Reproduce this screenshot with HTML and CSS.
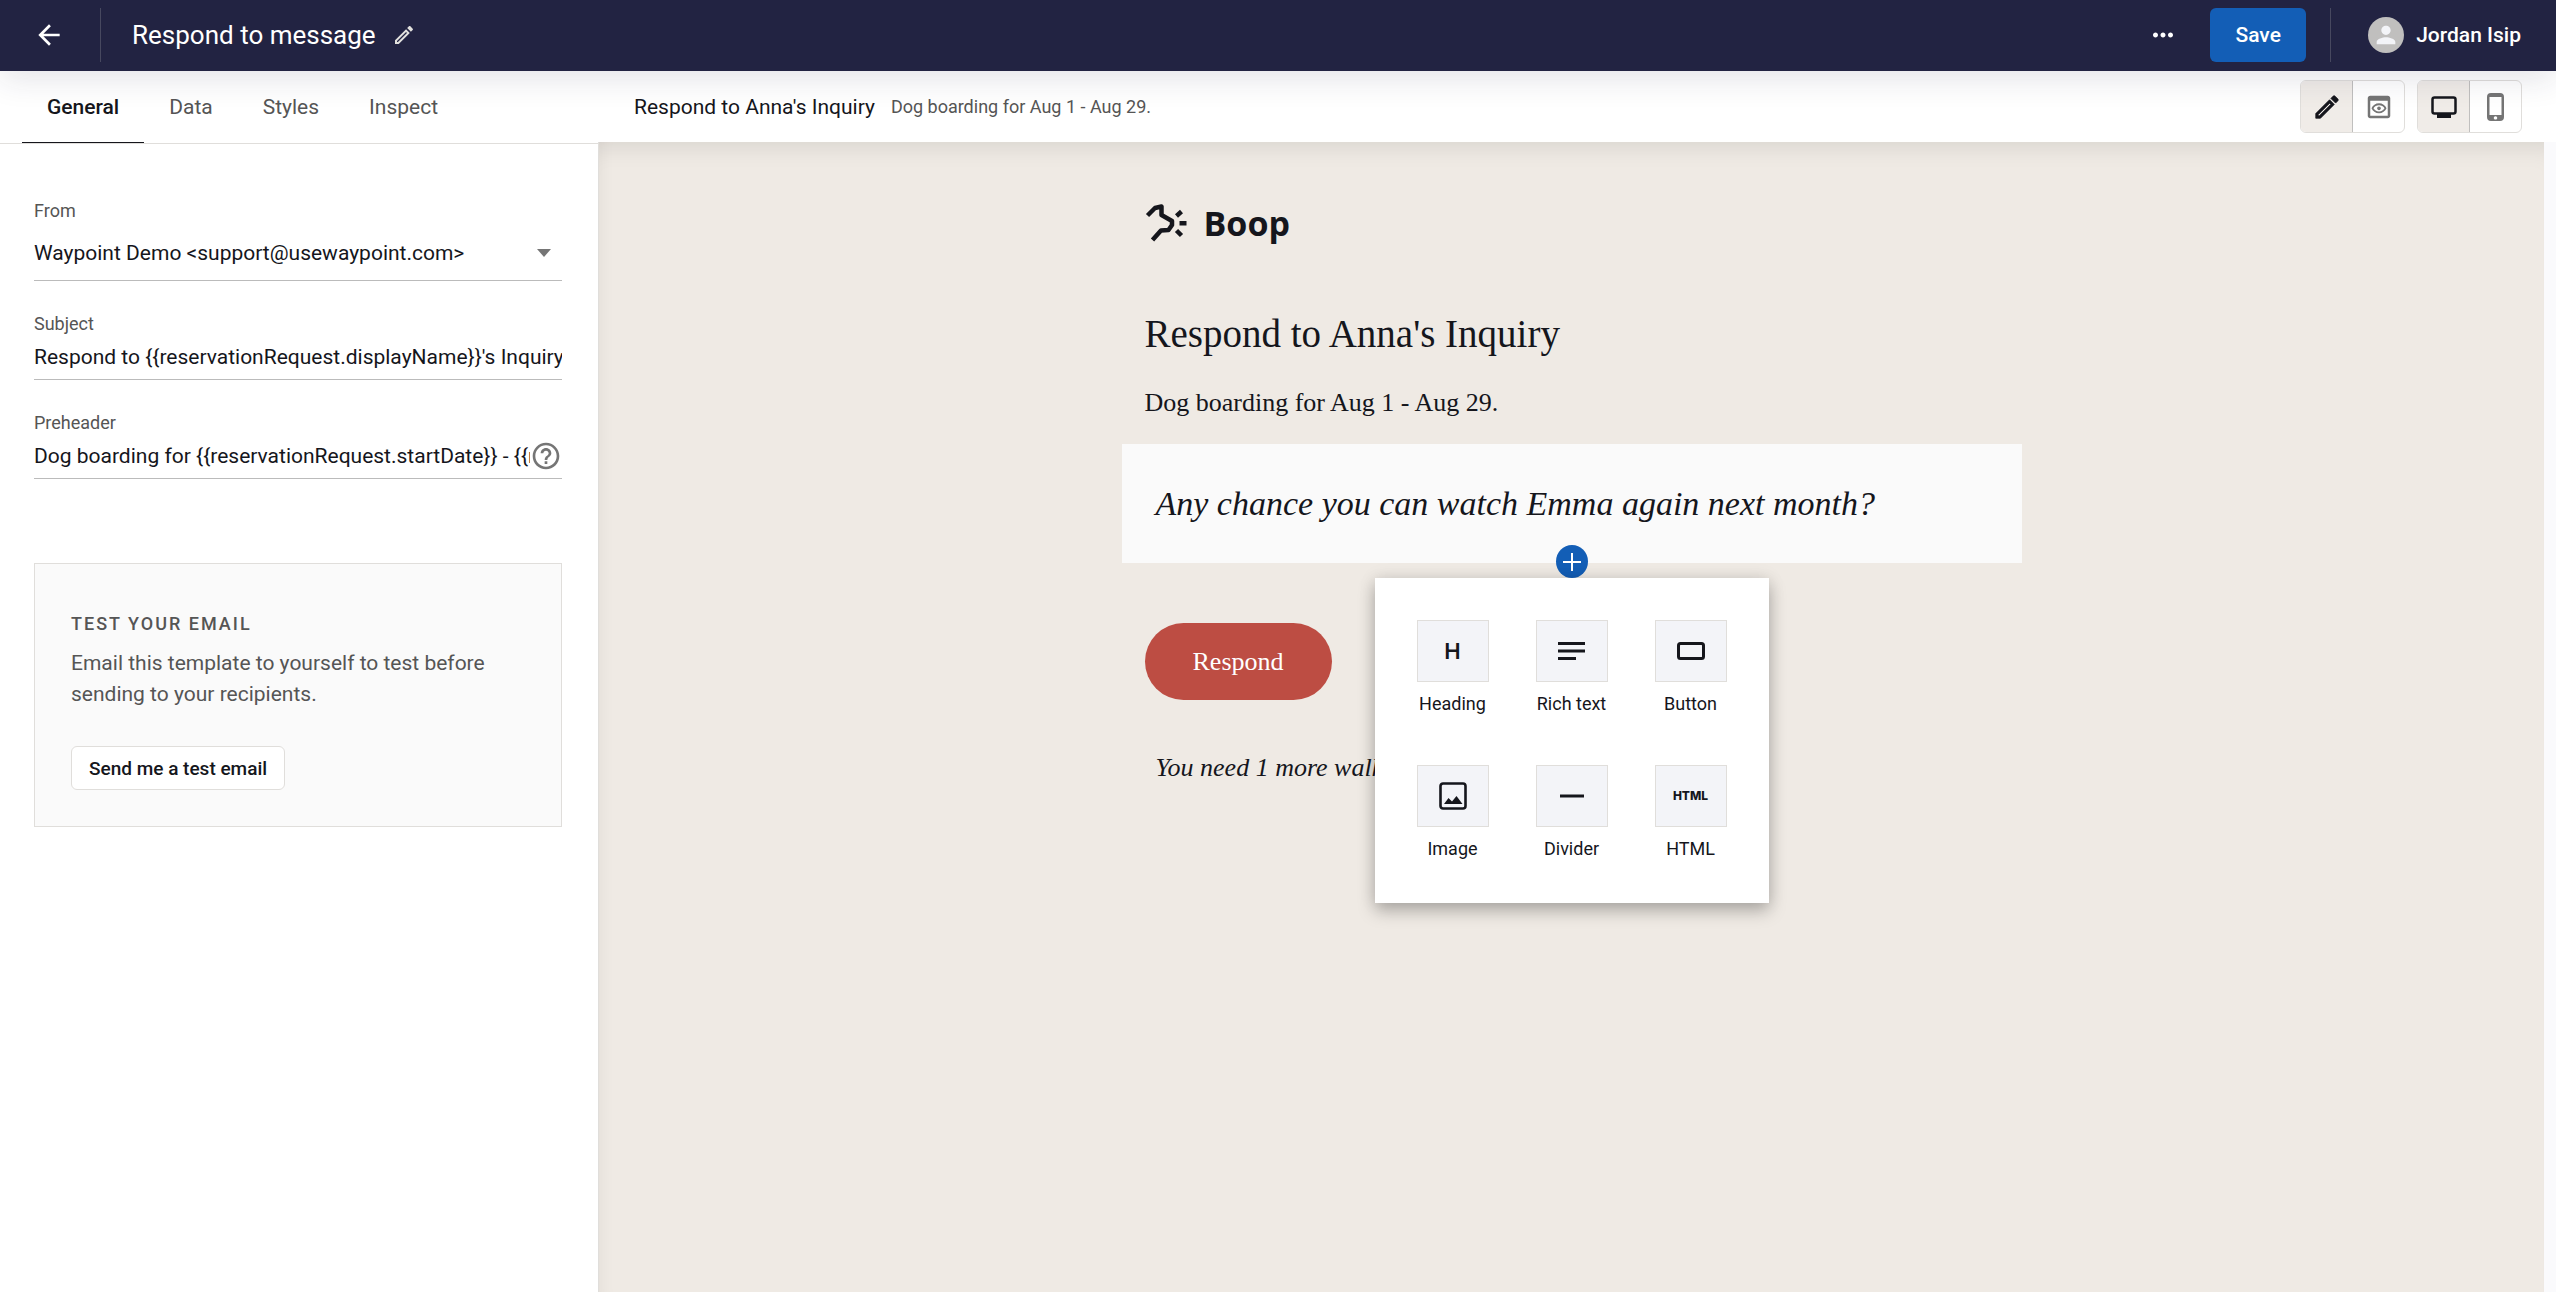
FILE: index.html
```html
<!DOCTYPE html>
<html lang="en">
<head>
<meta charset="utf-8">
<title>Respond to message</title>
<link rel="stylesheet" href="styles.css">
</head>
<body>
<header class="topbar">
  <button class="icon-btn back" type="button" aria-label="Back">
    <svg width="32" height="32" viewBox="0 0 24 24" fill="currentColor"><path d="M20 11H7.83l5.59-5.59L12 4l-8 8 8 8 1.41-1.41L7.83 13H20v-2z"/></svg>
  </button>
  <span class="divider"></span>
  <h1 class="title">Respond to message</h1>
  <button class="icon-btn rename" type="button" aria-label="Rename">
    <svg width="24" height="24" viewBox="0 0 24 24" fill="currentColor"><path d="M14.06 9.02l.92.92L5.92 19H5v-.92l9.06-9.06M17.66 3c-.25 0-.51.1-.7.29l-1.83 1.83 3.75 3.75 1.83-1.83c.39-.39.39-1.02 0-1.41l-2.34-2.34c-.2-.2-.45-.29-.71-.29zm-3.6 3.19L3 17.25V21h3.75L17.81 9.94l-3.75-3.75z"/></svg>
  </button>
  <div class="actions">
    <button class="icon-btn more" type="button" aria-label="More">
      <svg width="30" height="30" viewBox="0 0 24 24" fill="currentColor"><path d="M6 10c-1.100 0-2 .9-2 2s.9 2 2 2 2-.9 2-2-.9-2-2-2zm12 0c-1.100 0-2 .9-2 2s.9 2 2 2 2-.9 2-2-.9-2-2-2zm-6 0c-1.100 0-2 .9-2 2s.9 2 2 2 2-.9 2-2-.9-2-2-2z"/></svg>
    </button>
    <button class="save" type="button">Save</button>
    <span class="divider"></span>
    <button class="user" type="button">
      <span class="avatar"><svg width="28" height="28" viewBox="0 0 24 24" fill="currentColor"><path d="M12 12c2.210 0 4-1.790 4-4s-1.790-4-4-4-4 1.790-4 4 1.790 4 4 4zm0 2c-2.670 0-8 1.340-8 4v2h16v-2c0-2.660-5.330-4-8-4z"/></svg></span>
      Jordan Isip
    </button>
  </div>
</header>
<div class="workspace">
  <aside class="sidebar">
    <nav class="tabs">
      <button class="tab active" type="button">General</button>
      <button class="tab" type="button">Data</button>
      <button class="tab" type="button">Styles</button>
      <button class="tab" type="button">Inspect</button>
    </nav>
    <form class="settings">
      <div class="field from">
        <label for="from">From</label>
        <div class="control">
          <select id="from"><option>Waypoint Demo &lt;support@usewaypoint.com&gt;</option></select>
          <svg class="caret" width="14" height="8" viewBox="0 0 14 8" fill="currentColor"><path d="M0 0h14L7 8z"/></svg>
        </div>
      </div>
      <div class="field">
        <label for="subject">Subject</label>
        <div class="control"><input id="subject" type="text" value="Respond to {{reservationRequest.displayName}}'s Inquiry"></div>
      </div>
      <div class="field">
        <label for="preheader">Preheader</label>
        <div class="control">
          <input id="preheader" type="text" value="Dog boarding for {{reservationRequest.startDate}} - {{reservationRequest.endDate}}.">
          <svg class="help" width="32" height="32" viewBox="0 0 24 24" fill="currentColor"><path d="M11 18h2v-2h-2v2zm1-16C6.480 2 2 6.480 2 12s4.480 10 10 10 10-4.480 10-10S17.520 2 12 2zm0 18c-4.410 0-8-3.590-8-8s3.590-8 8-8 8 3.590 8 8-3.590 8-8 8zm0-14c-2.210 0-4 1.790-4 4h2c0-1.100.9-2 2-2s2 .9 2 2c0 2-3 1.750-3 5h2c0-2.250 3-2.500 3-5 0-2.210-1.790-4-4-4z"/></svg>
        </div>
      </div>
      <section class="test-card">
        <h2>TEST YOUR EMAIL</h2>
        <p>Email this template to yourself to test before sending to your recipients.</p>
        <button class="outlined" type="button">Send me a test email</button>
      </section>
    </form>
  </aside>
  <main class="preview">
    <div class="preview-bar">
      <span class="preview-subject">Respond to Anna's Inquiry</span>
      <span class="preview-text">Dog boarding for Aug 1 - Aug 29.</span>
      <div class="toggles">
        <div class="toggle-group">
          <button class="toggle on" type="button" aria-label="Edit"><svg width="30" height="30" viewBox="0 0 24 24" fill="currentColor"><path d="M14.060 9.020l.92.92L5.920 19H5v-.92l9.060-9.060M17.660 3c-.25 0-.51.1-.7.29l-1.830 1.830 3.750 3.750 1.830-1.830c.39-.39.39-1.020 0-1.410l-2.340-2.340c-.2-.2-.45-.29-.71-.29zm-3.600 3.190L3 17.250V21h3.750L17.810 9.940l-3.750-3.750z" stroke="currentColor" stroke-width=".6"/></svg></button>
          <button class="toggle" type="button" aria-label="Preview"><svg width="30" height="30" viewBox="0 0 24 24" fill="currentColor"><path d="M19 3H5c-1.110 0-2 .9-2 2v14c0 1.100.89 2 2 2h14c1.100 0 2-.9 2-2V5c0-1.100-.89-2-2-2zm0 16H5V7h14v12zm-5.500-6c0 .83-.67 1.500-1.500 1.500s-1.500-.67-1.500-1.500.67-1.500 1.500-1.500 1.500.67 1.500 1.500zM12 9c-2.730 0-5.060 1.660-6 4 .94 2.340 3.270 4 6 4s5.060-1.660 6-4c-.94-2.340-3.270-4-6-4zm0 6.500c-2 0-3.600-1-4.400-2.500.8-1.500 2.400-2.500 4.400-2.500s3.600 1 4.400 2.500c-.8 1.500-2.400 2.500-4.400 2.500z"/></svg></button>
        </div>
        <div class="toggle-group">
          <button class="toggle on" type="button" aria-label="Desktop"><svg width="26" height="24" viewBox="0 0 26 24" fill="none"><rect x="1.500" y="2.500" width="23" height="16" rx="2" stroke="currentColor" stroke-width="2.500"/><path d="M6 19h14v4H6z" fill="currentColor"/></svg></button>
          <button class="toggle" type="button" aria-label="Mobile"><svg width="18" height="28" viewBox="0 0 18 28"><path fill="currentColor" fill-rule="evenodd" d="M4 0h9a4 4 0 0 1 4 4v20a4 4 0 0 1-4 4H4a4 4 0 0 1-4-4V4a4 4 0 0 1 4-4zM2.500 4v18h12V4zM8.500 23.200a1.700 1.700 0 1 0 .01 0z"/></svg></button>
        </div>
      </div>
    </div>
    <div class="canvas">
      <article class="email">
        <div class="logo">
          <svg width="44" height="40" viewBox="0 0 44 40" fill="none" stroke="currentColor" stroke-width="4.500" stroke-linejoin="round"><path d="M2.500 12.500L10 5l6.500-1.500V12l10.500 6v4l-3.500 5-7.500.5L7.500 37"/><path d="M31.500 13l5-4.500M34.500 20.300h7M31.500 27.500l5 5"/></svg>
          <span>Boop</span>
        </div>
        <h2 class="heading">Respond to Anna's Inquiry</h2>
        <p class="body-text">Dog boarding for Aug 1 - Aug 29.</p>
        <div class="quote">
          <p>Any chance you can watch Emma again next month?</p>
          <div class="inserter">
            <button class="add" type="button" aria-label="Add block"><svg width="18" height="18" viewBox="0 0 18 18" stroke="currentColor" stroke-width="2"><path d="M9 0v18M0 9h18"/></svg></button>
            <div class="block-menu">
              <button class="block" type="button"><span class="tile h-tile">H</span>Heading</button>
              <button class="block" type="button"><span class="tile"><svg width="28" height="20" viewBox="0 0 28 20" stroke="currentColor" stroke-width="3"><path d="M0 2.500h27M0 10h27M0 17.500h18"/></svg></span>Rich text</button>
              <button class="block" type="button"><span class="tile"><svg width="28" height="18" viewBox="0 0 28 18" fill="none" stroke="currentColor" stroke-width="3"><rect x="1.500" y="1.500" width="25" height="15" rx="2"/></svg></span>Button</button>
              <button class="block" type="button"><span class="tile"><svg width="28" height="28" viewBox="0 0 28 28"><rect x="1.500" y="1.500" width="25" height="25" rx="2.500" fill="none" stroke="currentColor" stroke-width="2.600"/><path d="M5 22l4.500-6 3.500 3.500L17.500 14l6 8z" fill="currentColor"/></svg></span>Image</button>
              <button class="block" type="button"><span class="tile"><svg width="24" height="4" viewBox="0 0 24 4" fill="currentColor"><path d="M0 .5h24v3H0z"/></svg></span>Divider</button>
              <button class="block" type="button"><span class="tile html-tile">HTML</span>HTML</button>
            </div>
          </div>
        </div>
        <a class="respond" href="#">Respond</a>
        <p class="note">You need 1 more walk</p>
      </article>
    </div>
  </main>
</div>
</body>
</html>
```
FILE: styles.css
```css
* { box-sizing: border-box; }

body {
  margin: 0;
  min-height: 100vh;
  display: flex;
  flex-direction: column;
  background: #fff;
  color: #15161c;
  font-family: Roboto, "Liberation Sans", sans-serif;
  font-size: 21px;
}

h1, h2, p { margin: 0; font-weight: 400; }

button, input, select {
  font: inherit;
  color: inherit;
  border: 0;
  padding: 0;
  margin: 0;
  background: none;
}

svg { display: block; flex: none; }

/* Top bar */
.topbar {
  position: relative;
  z-index: 2;
  display: flex;
  align-items: center;
  height: 71px;
  padding: 0 35px 2px 33px;
  background: #222342;
  color: #fff;
  box-shadow: 0 8px 32px rgba(34, 35, 66, 0.12);
}
.icon-btn { display: flex; }
.divider { width: 1px; height: 54px; background: #47485f; }
.back { margin-right: 35px; }
.title { margin-left: 31px; font-size: 26px; line-height: 32px; }
.rename { margin-left: 16px; color: #e2e1de; }
.actions { display: flex; align-items: center; margin-left: auto; }
.save {
  width: 96px;
  height: 54px;
  margin: 0 24px 0 32px;
  border-radius: 6px;
  background: #135eb6;
  font-weight: 500;
}
.user { display: flex; align-items: center; gap: 12px; margin-left: 37px; font-weight: 500; }
.avatar {
  display: flex;
  align-items: center;
  justify-content: center;
  width: 36px;
  height: 36px;
  border-radius: 50%;
  background: #c0bfbe;
  color: #f3f4f8;
}

.workspace { flex: 1; display: flex; }

/* Sidebar */
.sidebar { flex: 0 0 598px; }
.tabs {
  display: flex;
  height: 73px;
  padding: 0 22px;
  border-bottom: 1px solid #e0dedb;
}
.tab { padding: 0 25px; color: #555; border-bottom: 1px solid transparent; }
.tab.active { color: #15161c; border-color: #15161c; font-weight: 500; }

.settings { padding: 55px 36px 0 34px; }
.field { margin-bottom: 31px; }
.field label { display: block; font-size: 18px; line-height: 24px; color: #555; }
.control {
  display: flex;
  align-items: center;
  height: 44px;
  padding-bottom: 2px;
  border-bottom: 1px solid #bbb;
}
.from .control { height: 58px; padding: 3px 0 0; }
.control input, .control select { flex: 1; min-width: 0; height: 100%; outline: 0; appearance: none; }
.caret { margin-right: 11px; color: #757575; }
.help { color: #757575; }

.test-card {
  margin-top: 84px;
  padding: 47px 36px 36px;
  border: 1px solid #e0dedb;
  background: #fafafa;
  color: #555;
}
.test-card h2 { font-size: 18px; line-height: 26px; font-weight: 500; letter-spacing: 2px; }
.test-card p { margin: 11px 0 36px; line-height: 31px; }
.outlined {
  display: block;
  height: 44px;
  padding: 0 17px;
  border: 1px solid #e0dedb;
  border-radius: 6px;
  background: #fff;
  color: #15161c;
  font-size: 19px;
  font-weight: 500;
}

/* Preview */
.preview { flex: 1; display: flex; flex-direction: column; min-width: 0; }
.preview-bar {
  display: flex;
  align-items: center;
  height: 71px;
  padding: 0 34px 0 36px;
}
.preview-text { margin-left: 16px; font-size: 18px; color: #555; }
.toggles { display: flex; gap: 12px; margin-left: auto; }
.toggle-group {
  display: flex;
  width: 105px;
  height: 53px;
  border: 1px solid #e0dedb;
  border-radius: 6px;
  overflow: hidden;
}
.toggle { flex: 1; display: flex; align-items: center; justify-content: center; color: #757575; }
.toggle.on { background: #f0ece8; border-right: 1px solid #c0bfbe; color: #15161c; }

.canvas {
  flex: 1;
  border-left: 1px solid #e0dedb;
  border-right: 12px solid #fafafc;
  background: #efeae4;
  box-shadow: inset 0 24px 24px -20px rgba(0, 0, 0, 0.1), inset 16px 0 16px -14px rgba(0, 0, 0, 0.05);
}
.email {
  width: 900px;
  margin: 0 auto;
  padding: 57px 0 80px;
  font-family: Charter, "Bitstream Charter", "Liberation Serif", serif;
  font-size: 26px;
}
.logo {
  display: flex;
  align-items: center;
  gap: 15px;
  height: 48px;
  padding-left: 23px;
  font-family: "Open Sans", sans-serif;
  font-size: 34px;
  font-weight: 700;
}
.heading { margin-top: 63px; padding-left: 23px; font-size: 39px; line-height: 48px; }
.body-text { margin-top: 27px; padding-left: 23px; line-height: 36px; }
.quote {
  position: relative;
  margin-top: 23px;
  padding: 36px 34px;
  background: #fafafa;
  font-size: 34px;
  line-height: 47px;
  font-style: italic;
}
.respond {
  display: block;
  width: 187px;
  margin: 60px 0 0 23px;
  border-radius: 39px;
  background: #bd4d43;
  color: #fff;
  line-height: 77px;
  text-align: center;
  text-decoration: none;
}
.note { margin-top: 50px; padding-left: 34px; line-height: 36px; font-style: italic; }

/* Block inserter */
.inserter {
  position: absolute;
  z-index: 1;
  top: 101px;
  left: 50%;
  transform: translateX(-50%);
  display: flex;
  flex-direction: column;
  align-items: center;
  font-family: Roboto, "Liberation Sans", sans-serif;
  font-size: 18px;
  font-style: normal;
  line-height: 24px;
}
.add {
  display: flex;
  align-items: center;
  justify-content: center;
  width: 32px;
  height: 33px;
  border-radius: 50%;
  background: #135eb6;
  color: #fff;
}
.block-menu {
  display: grid;
  grid-template-columns: repeat(3, 72px);
  gap: 49px 47px;
  padding: 42px;
  background: #fff;
  box-shadow: 0 8px 16px rgba(0, 0, 0, 0.25), 0 0 16px rgba(0, 0, 0, 0.1);
}
.block { display: flex; flex-direction: column; align-items: center; gap: 10px; white-space: nowrap; }
.tile {
  display: flex;
  align-items: center;
  justify-content: center;
  width: 72px;
  height: 62px;
  border: 1px solid #e0dedb;
  background: #f3f4f8;
}
.h-tile { font-family: Inter, sans-serif; font-size: 22px; font-weight: 600; }
.html-tile { font-family: Inter, sans-serif; font-size: 12px; font-weight: 800; }
```
